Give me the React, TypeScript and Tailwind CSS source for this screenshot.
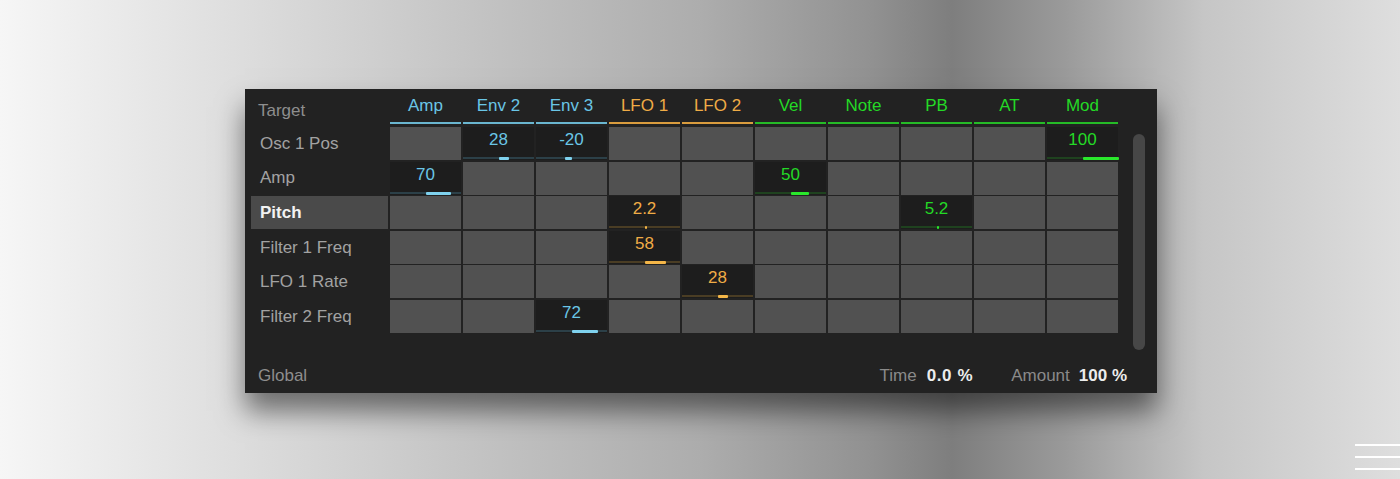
import type { CSSProperties } from 'react';

type Tone = 'blue' | 'orange' | 'green';

interface Source {
  name: string;
  tone: Tone;
}

const sources: Source[] = [
  { name: 'Amp', tone: 'blue' },
  { name: 'Env 2', tone: 'blue' },
  { name: 'Env 3', tone: 'blue' },
  { name: 'LFO 1', tone: 'orange' },
  { name: 'LFO 2', tone: 'orange' },
  { name: 'Vel', tone: 'green' },
  { name: 'Note', tone: 'green' },
  { name: 'PB', tone: 'green' },
  { name: 'AT', tone: 'green' },
  { name: 'Mod', tone: 'green' },
];

// values keyed by source index
const targets: { name: string; values: Record<number, number>; selected?: boolean }[] = [
  { name: 'Osc 1 Pos', values: { 1: 28, 2: -20, 9: 100 } },
  { name: 'Amp', values: { 0: 70, 5: 50 } },
  { name: 'Pitch', values: { 3: 2.2, 7: 5.2 }, selected: true },
  { name: 'Filter 1 Freq', values: { 3: 58 } },
  { name: 'LFO 1 Rate', values: { 4: 28 } },
  { name: 'Filter 2 Freq', values: { 2: 72 } },
];

const toneText: Record<Tone, string> = {
  blue: 'text-[#6ac6e6]',
  orange: 'text-[#f0ac46]',
  green: 'text-[#24d926]',
};

const toneLine: Record<Tone, string> = {
  blue: 'bg-[#6ab6d0]',
  orange: 'bg-[#d99c3e]',
  green: 'bg-[#25bb27]',
};

const toneTrack: Record<Tone, string> = {
  blue: 'bg-[#2c4048]',
  orange: 'bg-[#4a3d24]',
  green: 'bg-[#1f421f]',
};

const toneBar: Record<Tone, string> = {
  blue: 'bg-[#7fd2ee]',
  orange: 'bg-[#f4b648]',
  green: 'bg-[#2ae82c]',
};

function Cell({ value, tone }: { value?: number; tone: Tone }) {
  if (value === undefined) {
    return <div className="h-[33px] w-[71px] bg-[#515151]" />;
  }
  // half of the cell width is 100 %
  const width = Math.max(2, Math.round((Math.abs(value) / 100) * 35.5));
  const barStyle: CSSProperties =
    value >= 0 ? { left: '50%', width } : { right: '50%', width };
  return (
    <div className="relative h-[33px] w-[71px] bg-[#1d1d1d]">
      <div className={`pt-[2px] text-center text-[17px] leading-[21px] ${toneText[tone]}`}>
        {value}
      </div>
      <div className={`absolute bottom-[1px] left-0 right-0 h-[2px] ${toneTrack[tone]}`} />
      <div className={`absolute bottom-0 h-[3px] rounded-[1px] ${toneBar[tone]}`} style={barStyle} />
    </div>
  );
}

export default function App() {
  return (
    <div className="relative h-[479px] w-full overflow-hidden bg-[linear-gradient(to_right,#f6f6f6_0%,#dcdcdc_18%,#c2c2c2_35%,#adadad_50%,#929292_62%,#7e7e7e_68%,#9a9a9a_76%,#c6c6c6_86%,#dedede_100%)] pl-[245px] pt-[89px] font-['Liberation_Sans',Arial,sans-serif]">
      <div className="relative flex h-[304px] w-[912px] flex-col bg-[#222222] shadow-[0_18px_26px_0_rgba(0,0,0,0.5)]">
        {/* header */}
        <div className="flex h-[35px]">
          <div className="w-[145px] pl-[13px] pt-[12px] text-[17px] leading-[20px] text-[#8e8e8e]">
            Target
          </div>
          <div className="flex gap-[2px]">
            {sources.map((s) => (
              <div key={s.name} className="flex w-[71px] flex-col justify-end">
                <div className={`mb-[6px] text-center text-[17px] leading-[20px] ${toneText[s.tone]}`}>
                  {s.name}
                </div>
                <div className={`h-[2px] ${toneLine[s.tone]}`} />
              </div>
            ))}
          </div>
        </div>

        {/* matrix */}
        <div className="mt-[3px] flex flex-col gap-[1.6px]">
          {targets.map((t) => (
            <div key={t.name} className="flex">
              <div className="w-[145px] pl-[6px] pr-[2px]">
                <div
                  className={`flex h-[33px] items-center px-[9px] text-[17px] ${
                    t.selected ? 'bg-[#4a4a4a] font-bold text-[#f2f2f2]' : 'text-[#a2a2a2]'
                  }`}
                >
                  {t.name}
                </div>
              </div>
              <div className="flex gap-[2px]">
                {sources.map((s, i) => (
                  <Cell key={s.name} value={t.values[i]} tone={s.tone} />
                ))}
              </div>
            </div>
          ))}
        </div>

        {/* scrollbar */}
        <div className="absolute left-[888px] top-[45px] h-[216px] w-[12px] rounded-full bg-[#474747]" />

        {/* footer */}
        <div className="mt-auto flex items-center pb-[7px] pl-[13px] pr-[30px] text-[17px] leading-[20px]">
          <span className="text-[#8e8e8e]">Global</span>
          <div className="ml-auto flex items-center">
            <span className="text-[#8a8a8a]">Time</span>
            <span className="ml-[10px] font-bold tracking-[0.6px] text-[#ececec]">0.0 %</span>
            <span className="ml-[38px] text-[#8a8a8a]">Amount</span>
            <span className="ml-[9px] font-bold text-[#ececec]">100 %</span>
          </div>
        </div>
      </div>

      {/* corner lines */}
      <div className="absolute bottom-0 right-0 flex w-[45px] flex-col gap-[10px] pb-[9px]">
        <div className="h-[2px] bg-white" />
        <div className="h-[2px] bg-white" />
        <div className="h-[2px] bg-white" />
      </div>
    </div>
  );
}
